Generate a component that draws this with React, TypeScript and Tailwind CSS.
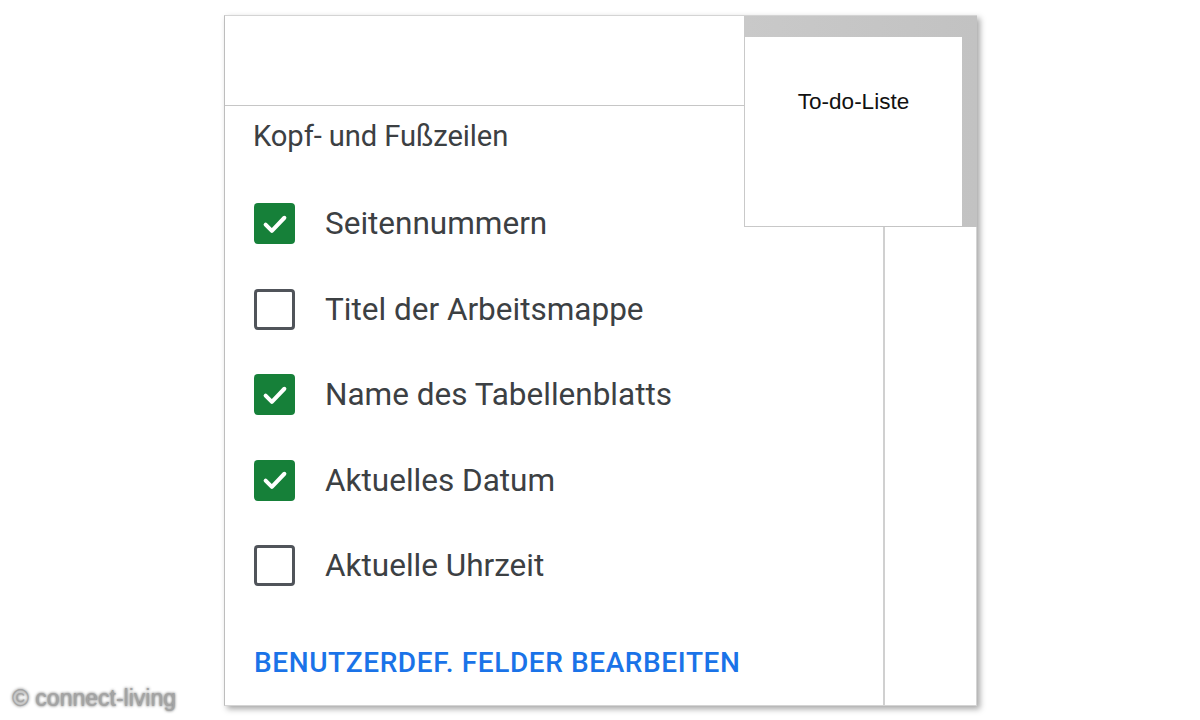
import React from 'react';

type Field = { label: string; checked: boolean };

const fields: Field[] = [
  { label: 'Seitennummern', checked: true },
  { label: 'Titel der Arbeitsmappe', checked: false },
  { label: 'Name des Tabellenblatts', checked: true },
  { label: 'Aktuelles Datum', checked: true },
  { label: 'Aktuelle Uhrzeit', checked: false },
];

const CheckBox: React.FC<{ checked: boolean }> = ({ checked }) =>
  checked ? (
    <div className="w-[41px] h-[41px] rounded-[4px] bg-[#168039] flex items-center justify-center shrink-0">
      <svg width="30" height="30" viewBox="0 0 24 24" fill="none">
        <path d="M4.5 12.5l5 5L19.5 7" stroke="white" strokeWidth="3.2" strokeLinecap="round" strokeLinejoin="round" />
      </svg>
    </div>
  ) : (
    <div className="w-[41px] h-[41px] rounded-[4px] border-[3px] border-[#50545a] bg-white shrink-0" />
  );

export default function App() {
  return (
    <div className="relative w-[1200px] h-[720px] bg-white overflow-hidden font-['Roboto',sans-serif]">
      <div className="relative ml-[224px] mt-[15px] w-[753px] h-[691px] bg-white border border-[#d4d4d4] border-l-[#bdbdbd] shadow-[3px_3px_6px_rgba(0,0,0,0.35)] flex flex-col">
        {/* top strip */}
        <div className="h-[90px] border-b border-[#c6c6c6] shrink-0" />
        <div className="flex flex-1">
          {/* left panel */}
          <div className="w-[660px] border-r-2 border-[#d0d0d0] pl-[28px] pt-[14px]">
            <div className="text-[29.2px] leading-[32px] text-[#3c4043] tracking-[-0.1px]">Kopf- und Fußzeilen</div>
            <div className="mt-[29px] flex flex-col">
              {fields.map(f => (
                <div key={f.label} className="h-[85.5px] flex items-center pl-px">
                  <CheckBox checked={f.checked} />
                  <span className="ml-[30px] text-[31.5px] leading-none text-[#3c4043]">{f.label}</span>
                </div>
              ))}
            </div>
            <div className="mt-[38px] pl-px text-[28px] leading-[32px] font-medium text-[#1a73e8] tracking-[0.6px]">
              BENUTZERDEF. FELDER BEARBEITEN
            </div>
          </div>
          <div className="flex-1" />
        </div>

        {/* sheet tab popup */}
        <div className="absolute top-0 right-[-1px] w-[233px] h-[211px] pt-[21px] pl-px pb-px pr-[15px] flex bg-gradient-to-r from-[#c9c9c9] to-[#c2c2c2]">
          <div className="flex-1 bg-white flex justify-center pt-[51px]">
            <span className="font-['Liberation_Sans',Arial,sans-serif] text-[22.5px] leading-[28px] text-[#111]">To-do-Liste</span>
          </div>
        </div>
      </div>

      {/* watermark */}
      <div className="absolute left-[12px] top-[683px] font-['Liberation_Sans',Arial,sans-serif] text-[23px] leading-[30px] text-[#a4a4a4] [text-shadow:0_0_3px_rgba(0,0,0,0.7)]">
        © connect-living
      </div>
    </div>
  );
}
